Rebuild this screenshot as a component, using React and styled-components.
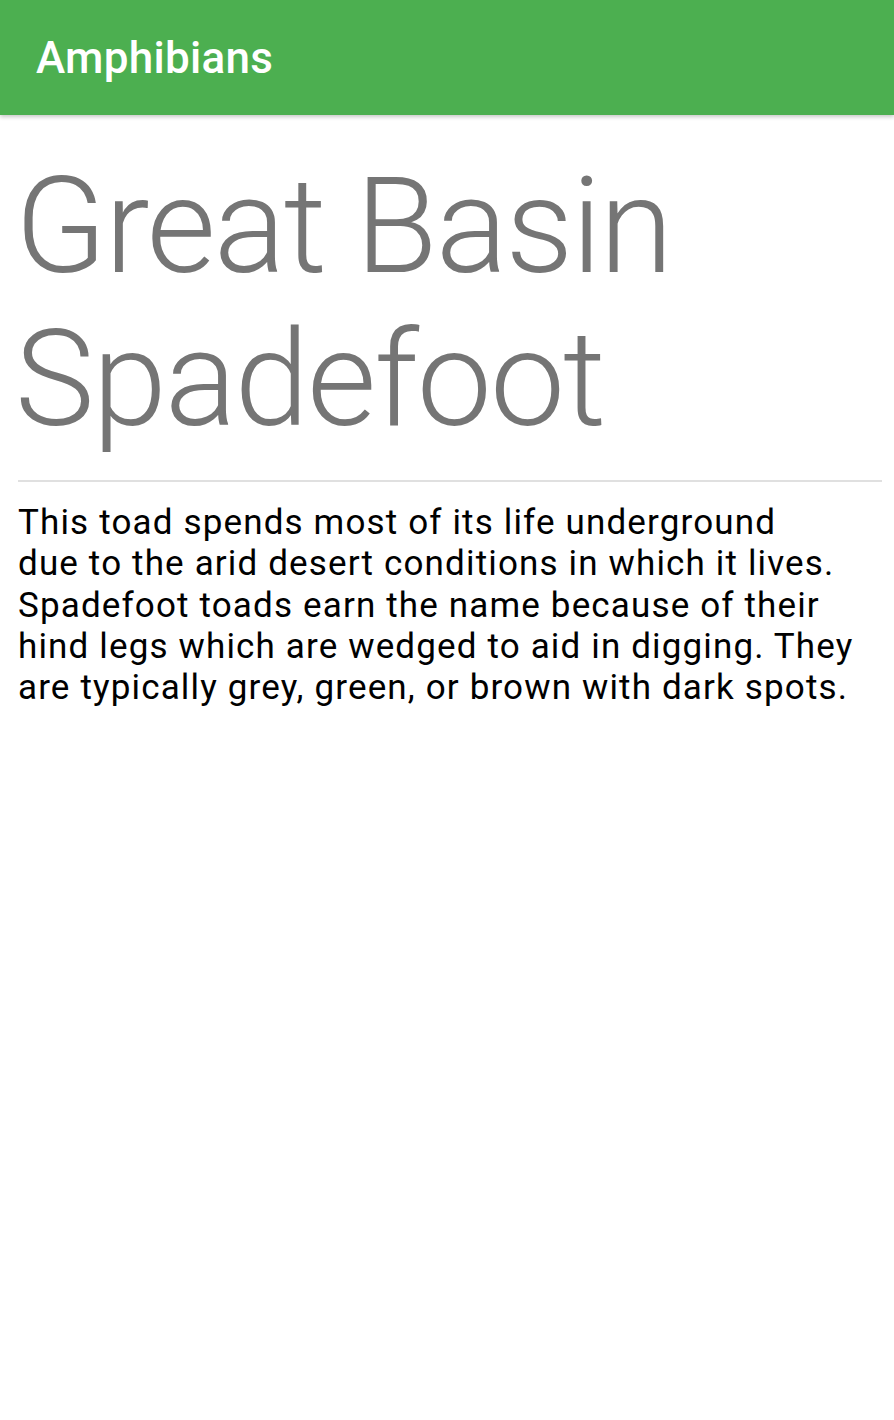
import React from "react";
import styled, { createGlobalStyle } from "styled-components";

const Global = createGlobalStyle`
  html, body { margin: 0; padding: 0; background: #ffffff; }
  body { font-family: Roboto, "Noto Sans", sans-serif; }
`;

const Page = styled.div`
  min-height: 1420px;
  background: #fff;
`;

const AppBar = styled.header`
  height: 115px;
  background: #4caf50;
  display: flex;
  align-items: center;
  padding: 0 36px;
  box-shadow: 0 2px 4px rgba(0, 0, 0, 0.22);
  position: relative;
`;

const AppTitle = styled.h1`
  margin: 0;
  color: #fff;
  font-family: Roboto, sans-serif;
  font-weight: 500;
  font-size: 44px;
  letter-spacing: 0.3px;
`;

const Content = styled.main`
  padding: 0 12px 0 18px;
`;

const Heading = styled.h2`
  margin: 0;
  padding-top: 35px;
  font-family: Roboto, sans-serif;
  font-weight: 300;
  font-size: 134px;
  line-height: 153px;
  color: #757575;
  letter-spacing: -2px;
  margin-left: -3px;
`;

const Divider = styled.hr`
  margin: 24px 0 0;
  border: none;
  height: 2px;
  background: #e0e0e0;
`;

const Body = styled.p`
  margin: 20px 0 0;
  font-family: Roboto, sans-serif;
  font-weight: 400;
  font-size: 35px;
  line-height: 41.25px;
  color: #000;
  letter-spacing: 1.15px;
`;

export default function App() {
  return (
    <Page>
      <Global />
      <AppBar>
        <AppTitle>Amphibians</AppTitle>
      </AppBar>
      <Content>
        <Heading>Great Basin Spadefoot</Heading>
        <Divider />
        <Body>
          This toad spends most of its life underground
          <br />
          due to the arid desert conditions in which it lives. Spadefoot toads earn the name because of their hind legs which are wedged to aid in digging. They are typically grey, green, or brown with dark spots.
        </Body>
      </Content>
    </Page>
  );
}
